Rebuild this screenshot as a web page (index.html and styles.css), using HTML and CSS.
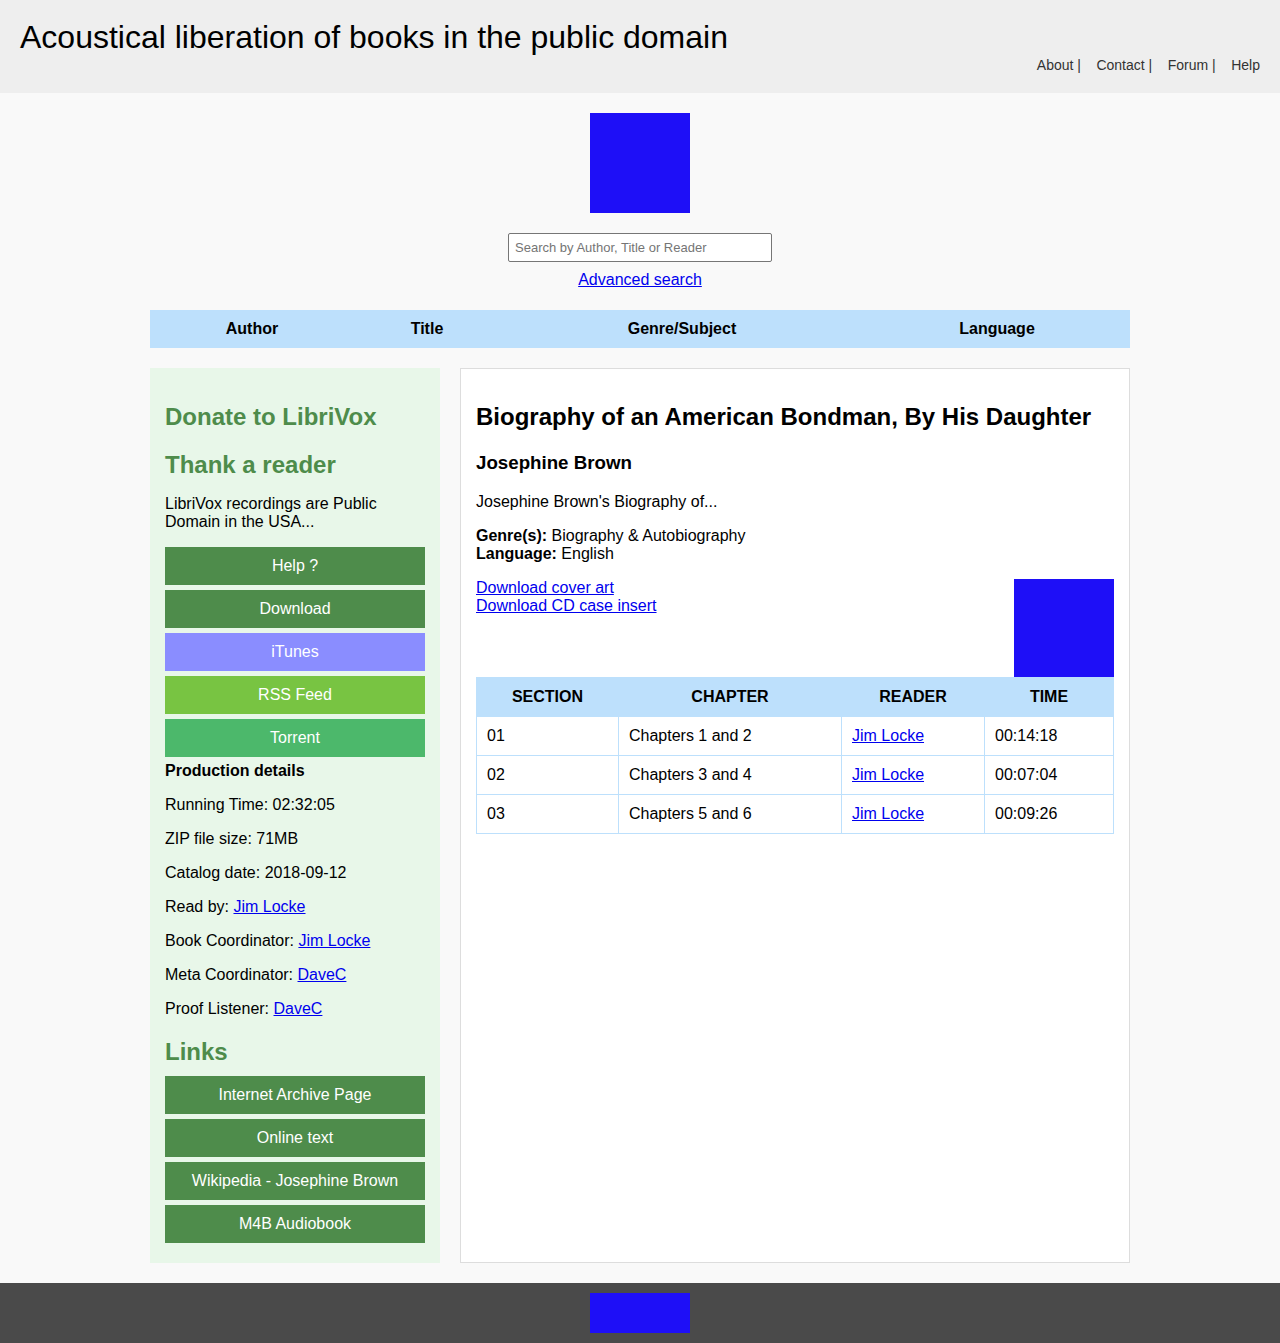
FILE: index.html
```html
<!DOCTYPE html>
<html lang="en">
<head>
<meta charset="utf-8">
<title>LibriVox - Biography of an American Bondman</title>
<link rel="stylesheet" href="styles.css">
</head>
<body>
<header class="site-header">
  <h1 class="site-title">Acoustical liberation of books in the public domain</h1>
  <nav class="top-nav">
    <span class="top-item"><a href="#">About</a> |</span>
    <span class="top-item"><a href="#">Contact</a> |</span>
    <span class="top-item"><a href="#">Forum</a> |</span>
    <span class="top-item"><a href="#">Help</a></span>
  </nav>
</header>

<div class="logo-wrap"><div class="logo"></div></div>

<form class="search">
  <input class="search-input" type="text" placeholder="Search by Author, Title or Reader">
  <a class="adv-link" href="#">Advanced search</a>
</form>

<nav class="browse">
  <a href="#">Author</a>
  <a href="#">Title</a>
  <a href="#">Genre/Subject</a>
  <a href="#">Language</a>
</nav>

<main class="main">
  <aside class="sidebar">
    <h2 class="side-h donate">Donate to LibriVox</h2>
    <h2 class="side-h thank">Thank a reader</h2>
    <p class="side-intro">LibriVox recordings are Public Domain in the USA...</p>
    <a class="btn btn-green" href="#">Help ?</a>
    <a class="btn btn-green" href="#">Download</a>
    <a class="btn btn-itunes" href="#">iTunes</a>
    <a class="btn btn-rss" href="#">RSS Feed</a>
    <a class="btn btn-torrent" href="#">Torrent</a>
    <div class="prod-title">Production details</div>
    <p class="prod">Running Time: 02:32:05</p>
    <p class="prod">ZIP file size: 71MB</p>
    <p class="prod">Catalog date: 2018-09-12</p>
    <p class="prod">Read by: <a href="#">Jim Locke</a></p>
    <p class="prod">Book Coordinator: <a href="#">Jim Locke</a></p>
    <p class="prod">Meta Coordinator: <a href="#">DaveC</a></p>
    <p class="prod">Proof Listener: <a href="#">DaveC</a></p>
    <h2 class="side-h links-h">Links</h2>
    <a class="btn btn-green" href="#">Internet Archive Page</a>
    <a class="btn btn-green" href="#">Online text</a>
    <a class="btn btn-green" href="#">Wikipedia - Josephine Brown</a>
    <a class="btn btn-green" href="#">M4B Audiobook</a>
  </aside>

  <section class="content">
    <h2 class="book-title">Biography of an American Bondman, By His Daughter</h2>
    <h3 class="book-author">Josephine Brown</h3>
    <p class="desc">Josephine Brown's Biography of...</p>
    <p class="meta"><b>Genre(s):</b> Biography &amp; Autobiography<br><b>Language:</b> English</p>
    <p class="dl"><span class="cover"></span><a href="#">Download cover art</a><br><a href="#">Download CD case insert</a></p>
    <table class="chapters">
      <colgroup>
        <col class="c1"><col class="c2"><col class="c3"><col class="c4">
      </colgroup>
      <thead>
        <tr><th>SECTION</th><th>CHAPTER</th><th>READER</th><th>TIME</th></tr>
      </thead>
      <tbody>
        <tr><td>01</td><td>Chapters 1 and 2</td><td><a href="#">Jim Locke</a></td><td>00:14:18</td></tr>
        <tr><td>02</td><td>Chapters 3 and 4</td><td><a href="#">Jim Locke</a></td><td>00:07:04</td></tr>
        <tr><td>03</td><td>Chapters 5 and 6</td><td><a href="#">Jim Locke</a></td><td>00:09:26</td></tr>
      </tbody>
    </table>
  </section>
</main>

<footer class="footer"><div class="footer-logo"></div></footer>
</body>
</html>
```

FILE: styles.css
```css
html, body {
  margin: 0;
  padding: 0;
}
body {
  background: #f9f9f9;
  font-family: "Liberation Sans", Arial, sans-serif;
  font-size: 16px;
  color: #000;
}
a { color: #0000ee; }

.site-header {
  background: #eeeeee;
  height: 93px;
  box-sizing: border-box;
  padding: 19px 20px 0 20px;
}
.site-title {
  margin: 0;
  font-size: 32px;
  font-weight: normal;
}
.top-nav {
  display: flex;
  justify-content: flex-end;
  gap: 15.5px;
  font-size: 14px;
  color: #333;
  margin-top: 1px;
}
.top-nav a {
  color: #333;
  text-decoration: none;
}

.logo-wrap {
  display: flex;
  justify-content: center;
  margin-top: 20px;
}
.logo {
  width: 100px;
  height: 100px;
  background: #1e0ff7;
}

.search {
  display: flex;
  flex-direction: column;
  align-items: center;
  margin-top: 20px;
}
.search-input {
  width: 264px;
  height: 29px;
  box-sizing: border-box;
  border: 1px solid #767676;
  border-radius: 2px;
  padding: 0 6px;
  font-family: "Liberation Sans", Arial, sans-serif;
  font-size: 13px;
  background: #fff;
  margin: 0;
}
.search-input::placeholder { color: #757575; }
.adv-link {
  margin-top: 9px;
}

.browse {
  width: 980px;
  margin: 21px auto 0;
  height: 38px;
  background: #bde0fc;
  display: grid;
  grid-template-columns: 204px 146px 364px 266px;
  align-items: center;
}
.browse a {
  text-align: center;
  font-weight: bold;
  color: #000;
  text-decoration: none;
}

.main {
  width: 980px;
  margin: 20px auto 0;
  display: flex;
  gap: 20px;
  align-items: stretch;
}
.sidebar {
  flex: 0 0 290px;
  width: 290px;
  box-sizing: border-box;
  background: #e8f7e9;
  padding: 15px 15px 15px;
}
.side-h {
  font-size: 24px;
  color: #4e8c4b;
  margin: 0;
}
.donate { margin-top: 20px; }
.thank { margin-top: 20px; margin-bottom: 16px; }
.links-h { margin-top: 20px; margin-bottom: 10px; }
.side-intro { margin: 0 0 16px; }

.btn {
  display: block;
  height: 38px;
  line-height: 38px;
  margin-bottom: 5px;
  text-align: center;
  color: #fff;
  text-decoration: none;
}
.btn-green { background: #4e8c4b; }
.btn-itunes { background: #8a8dff; }
.btn-rss { background: #78c442; }
.btn-torrent { background: #4cb86b; }

.prod-title {
  font-weight: bold;
  margin-bottom: 16px;
}
.prod { margin: 0 0 16px; }
.prod:last-of-type { margin-bottom: 0; }

.content {
  flex: 1 1 auto;
  min-width: 0;
  background: #fff;
  border: 1px solid #dddddd;
  padding: 15px;
}
.book-title {
  font-size: 24px;
  margin: 19px 0 0;
}
.book-author {
  font-size: 18.72px;
  margin: 21px 0 0;
}
.desc { margin: 18.72px 0 0; }
.meta { margin: 16px 0 0; }
.dl { margin: 16px 0 0; }
.cover {
  float: right;
  width: 100px;
  height: 98px;
  background: #1e0ff7;
}

.chapters {
  clear: both;
  width: 637px;
  border-collapse: collapse;
  table-layout: fixed;
}
.chapters th {
  background: #bde0fc;
  border: 1px solid #bde0fc;
  padding: 10px;
  font-weight: bold;
  text-align: center;
}
.chapters td {
  border: 1px solid #bde0fc;
  padding: 10px;
  text-align: left;
}
.c1 { width: 142px; }
.c2 { width: 223px; }
.c3 { width: 143px; }
.c4 { width: 129px; }

.footer {
  margin-top: 20px;
  height: 60px;
  background: #4a4a4a;
  display: flex;
  justify-content: center;
  align-items: center;
}
.footer-logo {
  width: 100px;
  height: 40px;
  background: #1e0ff7;
}
```
